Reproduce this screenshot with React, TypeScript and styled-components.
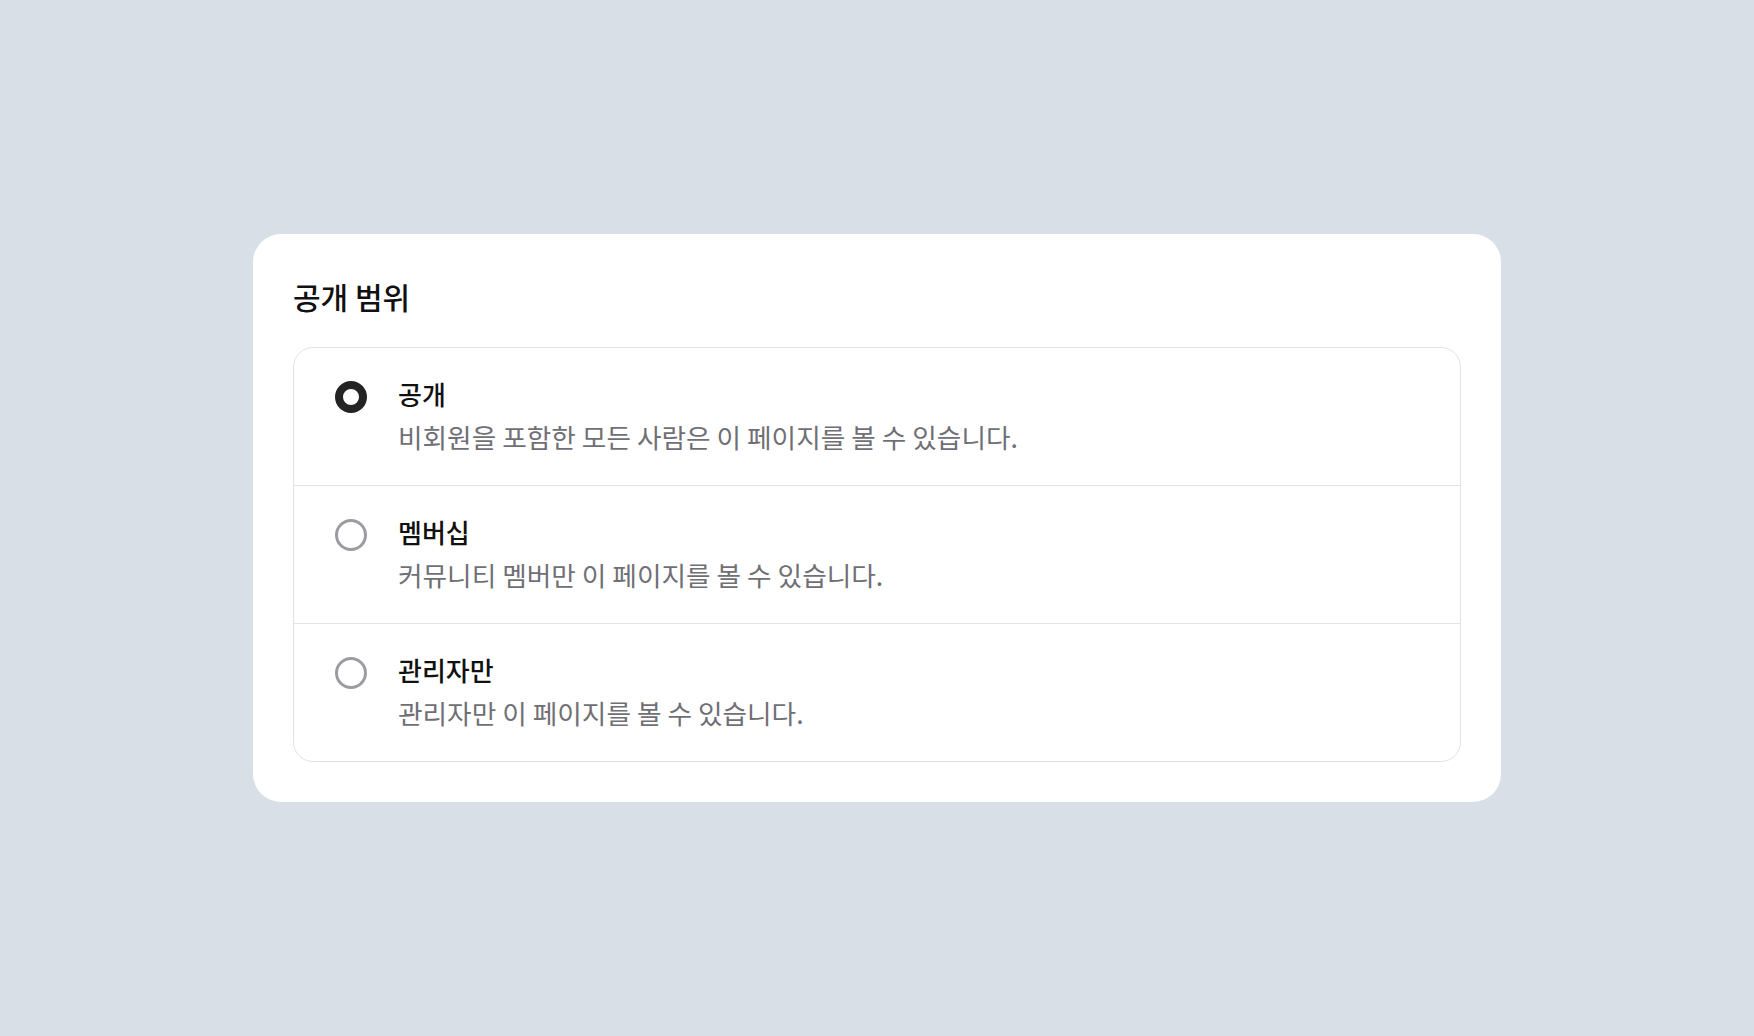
import styled, { createGlobalStyle } from 'styled-components';

const GlobalStyle = createGlobalStyle`
  html, body {
    margin: 0;
    padding: 0;
    background: #d9dfe7;
  }
  body {
    font-family: "Noto Sans CJK KR", "Noto Sans", sans-serif;
  }
  * {
    box-sizing: border-box;
  }
`;

const options = [
  { id: 'public', label: '공개', desc: '비회원을 포함한 모든 사람은 이 페이지를 볼 수 있습니다.' },
  { id: 'members', label: '멤버십', desc: '커뮤니티 멤버만 이 페이지를 볼 수 있습니다.' },
  { id: 'admins', label: '관리자만', desc: '관리자만 이 페이지를 볼 수 있습니다.' },
];

const App = () => {
  const selected = 'public';
  return (
    <>
      <GlobalStyle />
      <Page>
        <Card>
          <Title>공개 범위</Title>
          <OptionList>
            {options.map((opt) => (
              <OptionRow key={opt.id}>
                <Radio $checked={opt.id === selected} />
                <OptionText>
                  <Label>{opt.label}</Label>
                  <Desc>{opt.desc}</Desc>
                </OptionText>
              </OptionRow>
            ))}
          </OptionList>
        </Card>
      </Page>
    </>
  );
};

const Page = styled.div`
  width: 100%;
  height: 100vh;
  display: flex;
  align-items: center;
  justify-content: center;
`;
const Card = styled.div`
  width: 1248px;
  padding: 40px;
  background: #fff;
  border-radius: 28px;
`;
const Title = styled.h2`
  margin: 0 0 31px;
  padding-top: 2px;
  font-size: 30px;
  line-height: 40px;
  font-weight: 500;
  color: #111;
`;
const OptionList = styled.div`
  display: flex;
  flex-direction: column;
  border: 1px solid #e3e3e6;
  border-radius: 20px;
  overflow: hidden;
`;
const OptionRow = styled.div`
  display: flex;
  align-items: flex-start;
  gap: 31px;
  height: 137px;
  padding: 28px 41px 0;
  cursor: pointer;
  & + & {
    height: 138px;
    border-top: 1px solid #e3e3e6;
  }
`;
const Radio = styled.span<{ $checked: boolean }>`
  flex: none;
  width: 32px;
  height: 32px;
  margin-top: 5px;
  border-radius: 50%;
  background: #fff;
  border: ${({ $checked }) => ($checked ? '8px solid #242424' : '3px solid #9b9ba1')};
`;
const OptionText = styled.div`
  display: flex;
  flex-direction: column;
  gap: 7px;
`;
const Label = styled.div`
  font-size: 26px;
  line-height: 36px;
  font-weight: 500;
  color: #111;
`;
const Desc = styled.div`
  font-size: 26.7px;
  line-height: 36px;
  font-weight: 400;
  color: #6f6f76;
`;

export default App;
